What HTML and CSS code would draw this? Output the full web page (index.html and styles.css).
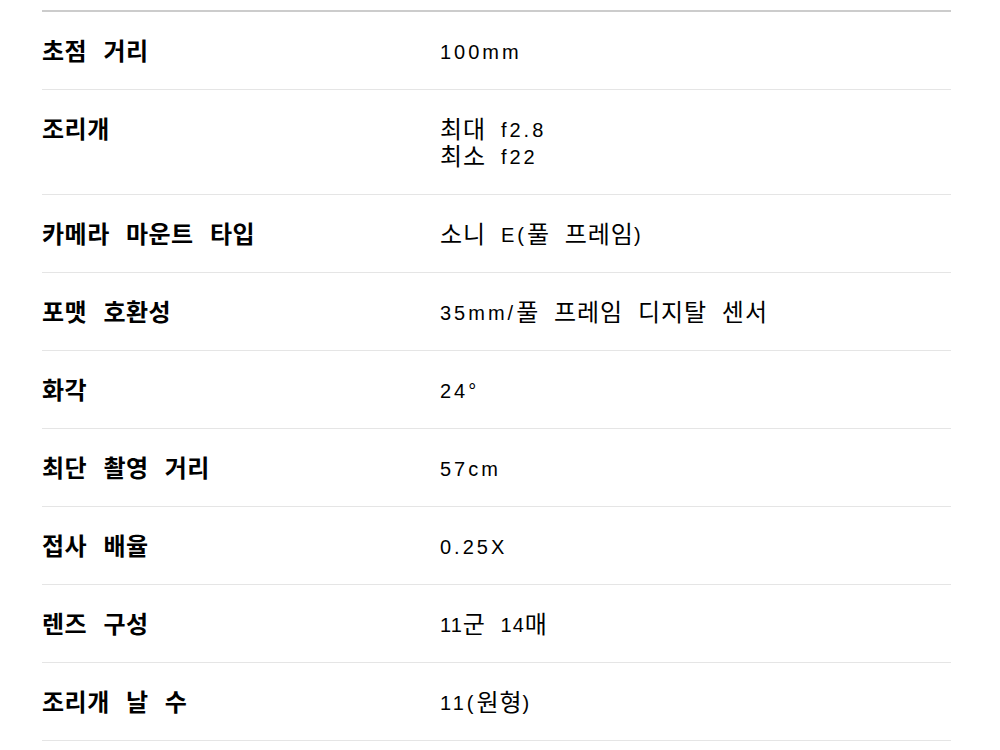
FILE: index.html
```html
<!DOCTYPE html>
<html lang="ko">
<head>
<meta charset="utf-8">
<title>사양</title>
<link rel="stylesheet" href="styles.css">
</head>
<body>
<dl class="specs">
  <div class="row"><dt>초점 거리</dt><dd><span class="en">100mm</span></dd></div>
  <div class="row"><dt>조리개</dt><dd>최대 <span class="en">f2.8</span><br>최소 <span class="en">f22</span></dd></div>
  <div class="row"><dt>카메라 마운트 타입</dt><dd>소니 <span class="en">E(</span>풀 프레임<span class="en">)</span></dd></div>
  <div class="row"><dt>포맷 호환성</dt><dd><span class="en">35mm/</span>풀 프레임 디지탈 센서</dd></div>
  <div class="row"><dt>화각</dt><dd><span class="en">24°</span></dd></div>
  <div class="row"><dt>최단 촬영 거리</dt><dd><span class="en">57cm</span></dd></div>
  <div class="row"><dt>접사 배율</dt><dd><span class="en">0.25X</span></dd></div>
  <div class="row"><dt>렌즈 구성</dt><dd><span class="en tight">11</span>군 <span class="en tight">14</span>매</dd></div>
  <div class="row"><dt>조리개 날 수</dt><dd><span class="en">11(</span>원형<span class="en">)</span></dd></div>
</dl>
</body>
</html>
```

FILE: styles.css
```css
html, body {
  margin: 0;
  padding: 0;
  background: #ffffff;
}

body {
  font-family: "Noto Sans CJK KR", "Liberation Sans", sans-serif;
  color: #000000;
}

.specs {
  margin: 10px 0 0 42px;
  width: 909px;
  padding: 0;
  border-top: 2px solid #cccccc;
}

.row {
  display: grid;
  grid-template-columns: 398px 1fr;
  border-bottom: 1px solid #e5e5e5;
  padding: 24px 0 26px;
}

.row dt,
.row dd {
  margin: 0;
  font-size: 24px;
  line-height: 27px;
}

.row dt {
  font-weight: 700;
  letter-spacing: 0.5px;
  word-spacing: 9px;
}

.row dd {
  font-weight: 400;
  letter-spacing: 1px;
  word-spacing: 7px;
}

.en {
  font-family: "Liberation Sans", Arial, sans-serif;
  font-size: 20px;
  font-weight: 400;
  line-height: 0;
  letter-spacing: 3px;
  word-spacing: 0;
  position: relative;
  top: -1px;
}

.tight {
  letter-spacing: 1px;
}
```
